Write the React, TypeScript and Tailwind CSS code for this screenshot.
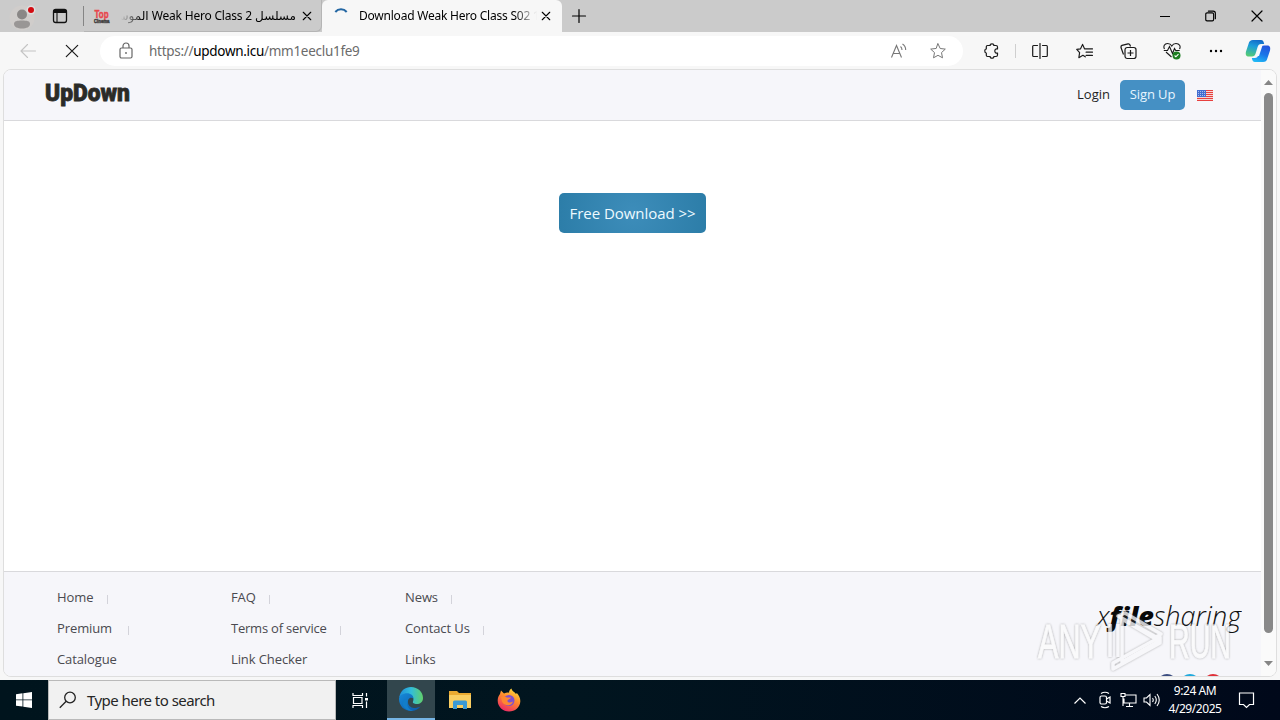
import React from "react";

type IconProps = { d: string; className?: string; size?: number; w?: number };

function Icon({ d, className = "", size = 16, w = 1.1 }: IconProps) {
  return (
    <svg width={size} height={size} viewBox="0 0 16 16" fill="none" stroke="currentColor" strokeWidth={w} strokeLinecap="round" strokeLinejoin="round" className={"block shrink-0 " + className}>
      <path d={d} />
    </svg>
  );
}

const CLOSE = "M3 3l10 10M13 3L3 13";
const STAR = "M8 .8l2.200 4.700 5.100.6-3.800 3.500 1 5.200L8 12.300l-4.500 2.500 1-5.200L.7 6.100l5.100-.6z";

function TabBar() {
  return (
    <div className="flex h-8 shrink-0 bg-[#cbcbcb] text-[12px] text-black">
      <div className="flex w-11 items-center justify-center">
        <svg width="28" height="28" viewBox="0 0 28 28" className="mt-px">
          <circle cx="14" cy="15" r="12.500" fill="#d0cdcb" />
          <circle cx="14" cy="11.500" r="5" fill="#8a8786" />
          <path d="M6 21c0-3 3-3.500 8-3.500s8 .500 8 3.500c0 3-3.500 4.500-8 4.500S6 24 6 21z" fill="#999695" />
          <circle cx="23" cy="7" r="4.500" fill="#dedede" />
          <circle cx="23" cy="7" r="3" fill="#d30b12" />
        </svg>
      </div>
      <div className="flex w-8 items-center justify-center">
        <svg width="16" height="16" viewBox="0 0 16 16" fill="none" stroke="#111" strokeWidth="1.300">
          <rect x="1.500" y="1.500" width="13" height="13" rx="2.200" />
          <path d="M2 3.500h12" strokeWidth="3" />
          <path d="M5 5v9" strokeWidth="1.100" />
        </svg>
      </div>
      <div className="ml-[7px] mt-1.5 h-5 w-px bg-[#858585]" />
      <div className="flex w-[238px] items-center rounded-br-md border-b border-r border-[#b5b5b5]">
        <svg width="18" height="20" viewBox="0 0 18 20" className="ml-[9px] shrink-0">
          <text x="1.500" y="12" fontFamily="Liberation Sans Narrow, Liberation Sans" fontSize="11" fontWeight="bold" fill="#e8464b" stroke="#e8464b" strokeWidth=".5" textLength="14" lengthAdjust="spacingAndGlyphs">Top</text>
          <text x="1" y="17" fontFamily="Liberation Sans" fontSize="5" fontWeight="bold" fill="#444" stroke="#444" strokeWidth=".5" textLength="15.500" lengthAdjust="spacingAndGlyphs">Cinema</text>
        </svg>
        <div dir="rtl" className="ml-[10px] h-5 w-[175px] overflow-hidden whitespace-nowrap font-['Noto_Sans','DejaVu_Sans',sans-serif] leading-5 [mask-image:linear-gradient(to_right,transparent,black_22px)]">
          مسلسل <span className="tracking-[-0.2px]">Weak Hero Class 2</span> الموسم
        </div>
        <Icon d={CLOSE} size={12} className="ml-[5px]" w={1.5} />
      </div>
      <div className="flex w-60 items-center rounded-t-md bg-[#f7f7f7]">
        <svg width="16" height="16" viewBox="0 0 16 16" fill="none" className="ml-[11px] shrink-0">
          <path d="M2.300 4A7.500 7.500 0 0 1 13.700 4" stroke="#2467a3" strokeWidth="2" />
        </svg>
        <div className="ml-[10px] h-5 w-[178px] overflow-hidden whitespace-nowrap font-['Noto_Sans',sans-serif] leading-5 tracking-[-0.22px] [mask-image:linear-gradient(to_left,transparent,black_22px)]">
          Download Weak Hero Class S02 1080p
        </div>
        <Icon d={CLOSE} size={12} className="ml-[3px]" w={1.5} />
      </div>
      <div className="flex w-[34px] items-center justify-center">
        <Icon d="M8 1.500v13M1.500 8h13" w={1.2} />
      </div>
      <div className="flex-1" />
      <div className="flex">
        <div className="flex w-[46px] items-center justify-center"><div className="h-px w-[10px] bg-black" /></div>
        <div className="flex w-[46px] items-center justify-center">
          <Icon size={14} w={1.3} d="M3.500 4.500h6q1.500 0 1.500 1.500v6q0 1.500-1.500 1.500h-6q-1.500 0-1.500-1.500v-6q0-1.500 1.500-1.500zM5 2.500h5.500q2.500 0 2.500 2.500V11" />
        </div>
        <div className="flex w-[46px] items-center justify-center"><Icon size={16} w={1.2} d="M3 3l10 10M13 3L3 13" /></div>
      </div>
    </div>
  );
}

function Copilot() {
  return (
    <svg width="26" height="24" viewBox="0 0 26 24">
      <defs>
        <linearGradient id="cpa" x1=".6" y1="0" x2=".3" y2="1">
          <stop offset="0" stopColor="#126bc9" /><stop offset=".4" stopColor="#1b9ddb" /><stop offset="1" stopColor="#55cb75" />
        </linearGradient>
        <linearGradient id="cpb" x1=".7" y1="0" x2=".3" y2="1">
          <stop offset="0" stopColor="#2455dd" /><stop offset=".5" stopColor="#1976e8" /><stop offset="1" stopColor="#21b9f5" />
        </linearGradient>
      </defs>
      <path d="M8 1h8c2 0 2.600 1.500 3.200 4h-3c-2 0-3 1-3.600 3l-2 6.500c-.6 2-1.600 3-3.600 3H4c-3 0-3.700-2-3-5L3.500 5C4.300 2 5.500 1 8 1z" fill="url(#cpa)" />
      <path d="M18 23h-8c-2 0-2.600-1.500-3.200-4h3c2 0 3-1 3.600-3l2-6.500c.6-2 1.600-3 3.600-3h3c3 0 3.700 2 3 5L22.500 19c-.8 3-2 4-4.500 4z" fill="url(#cpb)" />
      <path d="M14.500 7h2.800l-3.300 10h-2.800z" fill="#f7faff" />
    </svg>
  );
}

function Toolbar() {
  return (
    <div className="flex h-[37px] shrink-0 items-center bg-[#f7f7f7] pt-px text-[#1a1a1a]">
      <div className="ml-5 text-[#c4c4c4]"><Icon size={16} w={1.1} d="M15.500 8H1M7.500 1.500L1 8l6.500 6.500" /></div>
      <div className="ml-7"><Icon size={16} w={1.2} d="M2.300 2.300l11.400 11.400M13.700 2.300L2.300 13.700" /></div>
      <div className="ml-5 flex h-[30px] w-[863px] items-center rounded-full bg-white text-[#6b6b6b]">
        <svg width="16" height="18" viewBox="0 0 16 18" fill="none" stroke="#666" strokeWidth="1.200" className="ml-[18px]">
          <rect x="2" y="6" width="12" height="10" rx="1.500" />
          <path d="M5 6V4a3 3 0 0 1 6 0v2" />
          <circle cx="8" cy="11" r=".9" fill="#666" stroke="none" />
        </svg>
        <div className="ml-[15px] flex-1 whitespace-nowrap font-['Noto_Sans',sans-serif] text-[13.500px] tracking-[-0.29px]">
          https://<span className="text-black">updown.icu</span>/mm1eeclu1fe9
        </div>
        <svg width="18" height="16" viewBox="0 0 18 16" fill="none" stroke="#777" strokeWidth="1.100" className="mr-[22px]">
          <path d="M1.500 14.500L6.500 2.500l5 12M3.200 10.500h6.600M10.500 3.500q1.500 1.200 1.500 3.500M12.500 1q3.200 2 3.200 6" />
        </svg>
        <Icon d={STAR} w={1} className="mr-[17px] text-[#777]" />
      </div>
      <div className="ml-[21px] flex w-[295px] items-center">
        <Icon w={1.2} d="M3.500 2.500h2.700C6 1.300 6.800.8 8 .8s2 .6 1.800 1.700H12q1.500 0 1.500 1.500v2c-1.600-.4-2.700.6-2.700 2s1.100 2.400 2.700 2v2q0 1.500-1.500 1.500H9.800C10 14.700 9.200 15.200 8 15.200s-2-.6-1.800-1.700H3.500q-1.200 0-1.200-1.200V10C1.200 10 .8 9.200.8 8s.5-2 1.500-2V3.700q0-1.200 1.200-1.200z" />
        <div className="ml-[15px] h-[14px] w-px bg-[#cfcfcf]" />
        <Icon className="ml-[16px]" w={1.2} d="M8 .5v15M5.500 2.500H1.500q-.8 0-.8 1v9q0 1 .8 1h4M10.500 2.500h4q.8 0 .8 1v9q0 1-.8 1h-4" />
        <Icon size={17} className="ml-7" w={1.1} d="M9.500 5.500H8L6.200 1.300 4.300 5.500.7 6l2.700 3-.7 4.800 3.800-2.200 2.200 1.400M9.500 5.500H15.500M9.500 8.600h6M9.500 11.700h6" />
        <svg width="17" height="17" viewBox="0 0 17 17" fill="none" stroke="currentColor" strokeWidth="1.200" className="ml-[27px]">
          <path d="M3.500 11.500L1 4.500Q.7 3 2 2.400L8 .9q1.500-.3 2 1.100l.5 1.500" />
          <rect x="5" y="4.500" width="11" height="11" rx="2.200" /><path d="M10.500 7v6M7.500 10h6" />
        </svg>
        <svg width="18" height="18" viewBox="0 0 18 18" fill="none" stroke="currentColor" strokeWidth="1.100" className="ml-[26px]">
          <path d="M1.500 7C0 4.500 1.500 1.500 4.500 1.500 6.500 1.500 8 2.500 8.800 4 9.600 2.500 11 1.500 13 1.500c3.500 0 5 3 3.500 5.500M3 10l5.500 5M.8 8.500h3.700l2-4 3 7 2-5 1.200 2h4" />
          <circle cx="13.500" cy="13.500" r="4" fill="#1d7d20" stroke="none" /><path d="M11.600 13.500l1.300 1.300 2.600-2.600" stroke="#fff" />
        </svg>
        <svg width="16" height="4" className="ml-[27px]"><circle cx="3" cy="2" r="1.200" /><circle cx="8" cy="2" r="1.200" /><circle cx="13" cy="2" r="1.200" /></svg>
        <div className="ml-[21px]"><Copilot /></div>
      </div>
    </div>
  );
}

function Flag() {
  return (
    <svg width="16" height="11" viewBox="0 0 16 11" shapeRendering="crispEdges" className="mt-px">
      <rect width="16" height="11" fill="#f3d5d5" />
      <path d="M0 .5h16M0 2.500h16M0 4.500h16M0 6.500h16M0 8.500h16M0 10.500h16" stroke="#e8403f" />
      <rect width="9" height="7" fill="#426dd0" />
      <path d="M1 1.500h8M1 3.500h8M1 5.500h8" stroke="#a9bded" strokeDasharray="1 1" />
    </svg>
  );
}

function FooterLink({ label, bar }: { label: string; bar?: string }) {
  return (
    <div className="flex h-[31px] items-center">
      <span>{label}</span>
      {bar && <span className={"mt-1 h-[9px] w-px bg-[#d3d3da] " + bar} />}
    </div>
  );
}

function Brand() {
  return (
    <svg width="206" height="80" viewBox="0 0 206 80" className="block">
      <defs>
        <filter id="soft" x="-10%" y="-10%" width="120%" height="120%"><feDropShadow dx="0" dy="0" stdDeviation="1.300" floodColor="#777" floodOpacity=".8" /></filter>
      </defs>
      <text x="61" y="27" fontFamily="Open Sans" fontSize="27" fontStyle="italic" fontWeight="300" fill="#111" textLength="144" lengthAdjust="spacingAndGlyphs">x<tspan fontWeight="800" fill="#080808">file</tspan>sharing</text>
      <g filter="url(#soft)" opacity=".8">
        <g fontFamily="Liberation Sans Narrow, Liberation Sans" fontSize="49" fill="#fbfbfc" stroke="#fbfbfc" strokeWidth=".8">
          <text x="2" y="59" textLength="63" lengthAdjust="spacingAndGlyphs">ANY</text>
          <text x="133" y="59" textLength="62" lengthAdjust="spacingAndGlyphs">RUN</text>
        </g>
        <g fill="none" stroke="#f8f8fa" strokeWidth="3.500" strokeLinejoin="round">
          <path d="M74 25v33M82 25v33" />
          <path d="M86 20v43l37-21z" />
          <path d="M77 64v6l47-26v-6z" />
          <path d="M82 17l7-3 36 21-5 3z" />
        </g>
      </g>
    </svg>
  );
}

function Page() {
  return (
    <div className="flex min-w-0 flex-1 flex-col font-['Open_Sans',sans-serif]">
      <header className="flex h-[51px] shrink-0 items-start border-b border-[#d9d9dc] bg-[#f6f6fa] pl-[41px] pr-12 text-[13px]">
        <svg width="88" height="34" viewBox="0 0 88 34" className="mt-1">
          <text x="0" y="27" fontFamily="Roboto" fontSize="24" fontWeight="900" fill="#2b2b28" stroke="#2b2b28" strokeWidth=".8" textLength="85" lengthAdjust="spacingAndGlyphs">UpDown</text>
        </svg>
        <div className="mt-[10px] ml-auto flex h-[30px] items-center">
          <span className="mr-[10px] text-[#1f1f24]">Login</span>
          <span className="mr-3 flex h-[30px] w-[65px] items-center justify-center rounded-[5px] bg-[#4590c4] tracking-[-0.1px] text-[#e7f5ff]">Sign Up</span>
          <Flag />
        </div>
      </header>
      <main className="flex flex-1 items-start justify-center bg-white pt-[72px]">
        <button className="h-10 w-[147px] rounded-[5px] bg-[radial-gradient(circle,#3d8dba,#2c7da8)] text-[15px] tracking-[-0.05px] text-[#edfaff]">Free Download &gt;&gt;</button>
      </main>
      <footer className="flex h-[105px] shrink-0 overflow-hidden border-t border-[#d9d9dc] bg-[#f6f6fa] pl-[53px] text-[13px] text-[#4a4a50]">
        <div className="w-[174px] shrink-0 pt-2.5 tracking-[-0.1px]">
          <FooterLink label="Home" bar="ml-[14px]" />
          <FooterLink label="Premium" bar="ml-[16px]" />
          <FooterLink label="Catalogue" />
        </div>
        <div className="w-[174px] shrink-0 pt-2.5 tracking-[-0.1px]">
          <FooterLink label="FAQ" bar="ml-[13px]" />
          <div className="tracking-[-0.22px]"><FooterLink label="Terms of service" bar="ml-[13px]" /></div>
          <FooterLink label="Link Checker" />
        </div>
        <div className="w-[174px] shrink-0 pt-2.5 tracking-[-0.1px]">
          <FooterLink label="News" bar="ml-[13px]" />
          <FooterLink label="Contact Us" bar="ml-[13px]" />
          <FooterLink label="Links" />
        </div>
        <div className="ml-auto mr-[19px] pt-[27px]">
          <Brand />
          <svg width="206" height="12" viewBox="0 0 206 12" className="-mt-[7px]">
            <circle cx="131" cy="12" r="10" fill="#3b4d80" /><circle cx="154" cy="12" r="10" fill="#20a9dd" /><circle cx="177" cy="12" r="10" fill="#df3039" />
          </svg>
        </div>
      </footer>
    </div>
  );
}

function Scrollbar() {
  return (
    <div className="flex w-[15px] shrink-0 flex-col items-center bg-[#fafafa] pt-2.5">
      <svg width="9" height="5" className="shrink-0"><path d="M0 5l4.500-5L9 5z" fill="#858585" /></svg>
      <div className="mt-2 h-[540px] w-[9px] shrink-0 rounded-full bg-[#898989]" />
      <svg width="9" height="5" className="mt-7 shrink-0"><path d="M0 0l4.500 5L9 0z" fill="#858585" /></svg>
    </div>
  );
}

function Taskbar() {
  return (
    <div className="flex h-10 shrink-0 items-stretch bg-[linear-gradient(to_right,#00141d,#01151f_45%,#00081a)] text-white">
      <div className="flex w-12 items-center justify-center">
        <svg width="16" height="16" viewBox="0 0 16 16" fill="white"><path d="M0 2.200L6.500 1.300v6.200H0zM7.300 1.200L16 0v7.500H7.300zM0 8.300h6.500v6.300L0 13.700zM7.300 8.300H16V16l-8.700-1.200z" /></svg>
      </div>
      <div className="flex w-[288px] items-center border border-[#b9b9b9] bg-[#f1f1f1] text-[#262626]">
        <svg width="18" height="18" viewBox="0 0 18 18" fill="none" stroke="#222" strokeWidth="1.300" className="ml-[10px]"><circle cx="11" cy="6.500" r="5.300" /><path d="M7.200 10.300L.8 16.700" /></svg>
        <span className="ml-[10px] font-['Noto_Sans',sans-serif] text-[15px] tracking-[-0.54px]">Type here to search</span>
      </div>
      <div className="flex w-[51px] items-center pl-4">
        <svg width="17" height="17" viewBox="0 0 17 17" fill="none" stroke="white" strokeWidth="1.200"><path d="M1 1v2.500h9.500V1M1.500 5.500h8.500v6H1.500zM1 16v-2.500h9.500V16M14.500 1v3.500M14.500 9.500V16" /><path d="M13 6h3v2.500h-3z" fill="white" stroke="none" /></svg>
      </div>
      <div className="flex w-12 items-center justify-center border-b-2 border-[#76b5e5] bg-[#32464d]">
        <svg width="26" height="26" viewBox="0 0 26 26">
          <defs>
            <linearGradient id="ea" x1="0" x2="1"><stop stopColor="#1e8edb" /><stop offset=".5" stopColor="#32bdda" /><stop offset="1" stopColor="#61d06a" /></linearGradient>
            <linearGradient id="eb" x1="0" y1="0" x2="1" y2="1"><stop stopColor="#168ad9" /><stop offset="1" stopColor="#0b56a8" /></linearGradient>
          </defs>
          <path d="M1.300 11C2.500 4.500 7.300 1 13 1c7 0 12 5 12 11 0 4-3 6-6.300 6-2.500 0-4.400-1-3.700-2.500 1.500-3.500-.5-6.500-5-6.500-4 0-7.500 2-8.700 2z" fill="url(#ea)" />
          <path d="M1 13c0-3.500 4-5.700 8-5.700 3.800 0 6.500 2.500 6.500 5.200-4-2-6 1-5.500 4.500.7 4 5 5.500 8 5 2-.3 4-1.300 4.700-1.700C20.500 23.500 17 25 13 25 6.500 25 1 20 1 13z" fill="url(#eb)" />
          <path d="M10 13.500c-3 6 2 11.500 5.500 11.300-6 .7-11-3.300-11-7.800 0-2 2-4 5.500-3.500z" fill="#127dc9" />
        </svg>
      </div>
      <div className="flex w-[50px] items-center justify-center">
        <svg width="22" height="20" viewBox="0 0 22 20"><path d="M0 1h8l2 2h12v15H0z" fill="#eaaa31" /><path d="M0 5h22v13H0z" fill="#f9ce62" /><path d="M4 19v-7q0-1.500 1.500-1.500h11Q18 10.500 18 12v7h-4v-4H8v4z" fill="#3a9ad6" /></svg>
      </div>
      <div className="flex w-12 items-center justify-center">
        <svg width="24" height="24" viewBox="0 0 24 24">
          <defs><linearGradient id="ff" x1=".8" y1="0" x2=".3" y2="1"><stop stopColor="#ffe13c" /><stop offset=".45" stopColor="#ff8c2d" /><stop offset="1" stopColor="#ed2866" /></linearGradient></defs>
          <path d="M3 6L4 2.500 7 5.500c2-1 3.500-1 5-.8C12 3 13 1.500 14.500.500c.5 3 3 3 4.500 5.500l.8-1C22 7.500 23.500 10 23.300 13.500 23 19.500 18 23.500 12 23.500S.7 19 .7 12.800C.7 10 1.500 8 3 6z" fill="url(#ff)" />
          <circle cx="12" cy="12.500" r="5.500" fill="#8050cd" /><path d="M4 9c3-1 5 0 6 .5h4c-1 2-3 1.500-3.500 3-.8 2 2.500 3 5.500 1-1 5-9 5-11 0z" fill="#ff8830" />
        </svg>
      </div>
      <div className="flex-1" />
      <div className="flex items-center">
        <svg width="12" height="7" viewBox="0 0 12 7" fill="none" stroke="white" strokeWidth="1.200"><path d="M.5 6.500L6 1l5.500 5.500" /></svg>
        <svg width="14" height="18" viewBox="0 0 14 18" fill="none" stroke="white" strokeWidth="1.200" className="ml-3"><rect x="2" y="5" width="6.500" height="8" rx="1.500" /><path d="M8.500 8l3.500-2v6l-3.500-2M3 2.500q4-2.500 8 0M3 15.500q4 2.500 8 0" /></svg>
        <svg width="17" height="16" viewBox="0 0 17 16" fill="none" stroke="white" strokeWidth="1.100" className="ml-[8px]"><path d="M5.500 3H16v8H4V6.500M9.500 11v3.500M6 14.500h7M1 1.500h4v3H1zM3 4.500V14" /></svg>
        <svg width="18" height="16" viewBox="0 0 18 16" fill="none" stroke="white" strokeWidth="1.100" className="ml-[6px]"><path d="M1 6h2.500L7 2.500v11L3.500 10H1zM9.500 6q1.500 2 0 4M11.800 4q3 4 0 8M14 2q4.500 6 0 12" /></svg>
      </div>
      <div className="ml-[5px] flex w-[58px] flex-col items-center whitespace-nowrap pt-[2px] font-['Noto_Sans',sans-serif] text-[12px] leading-[18px] tracking-[-0.45px]">
        <span>9:24 AM</span><span>4/29/2025</span>
      </div>
      <div className="ml-[13px] flex w-[43px] items-center">
        <svg width="18" height="18" viewBox="0 0 18 18" fill="none" stroke="white" strokeWidth="1.200" className="ml-px"><path d="M1.500 2h14v11.500h-4L8.500 16.500l-3-3h-4z" /></svg>
      </div>
    </div>
  );
}

export default function App() {
  return (
    <div className="flex h-[720px] w-[1280px] flex-col overflow-hidden bg-[#f7f7f7]">
      <TabBar />
      <Toolbar />
      <div className="mx-[3px] mb-[3px] flex min-h-0 flex-1 overflow-hidden rounded-lg border border-[#dedede] bg-white">
        <Page />
        <Scrollbar />
      </div>
      <Taskbar />
    </div>
  );
}
